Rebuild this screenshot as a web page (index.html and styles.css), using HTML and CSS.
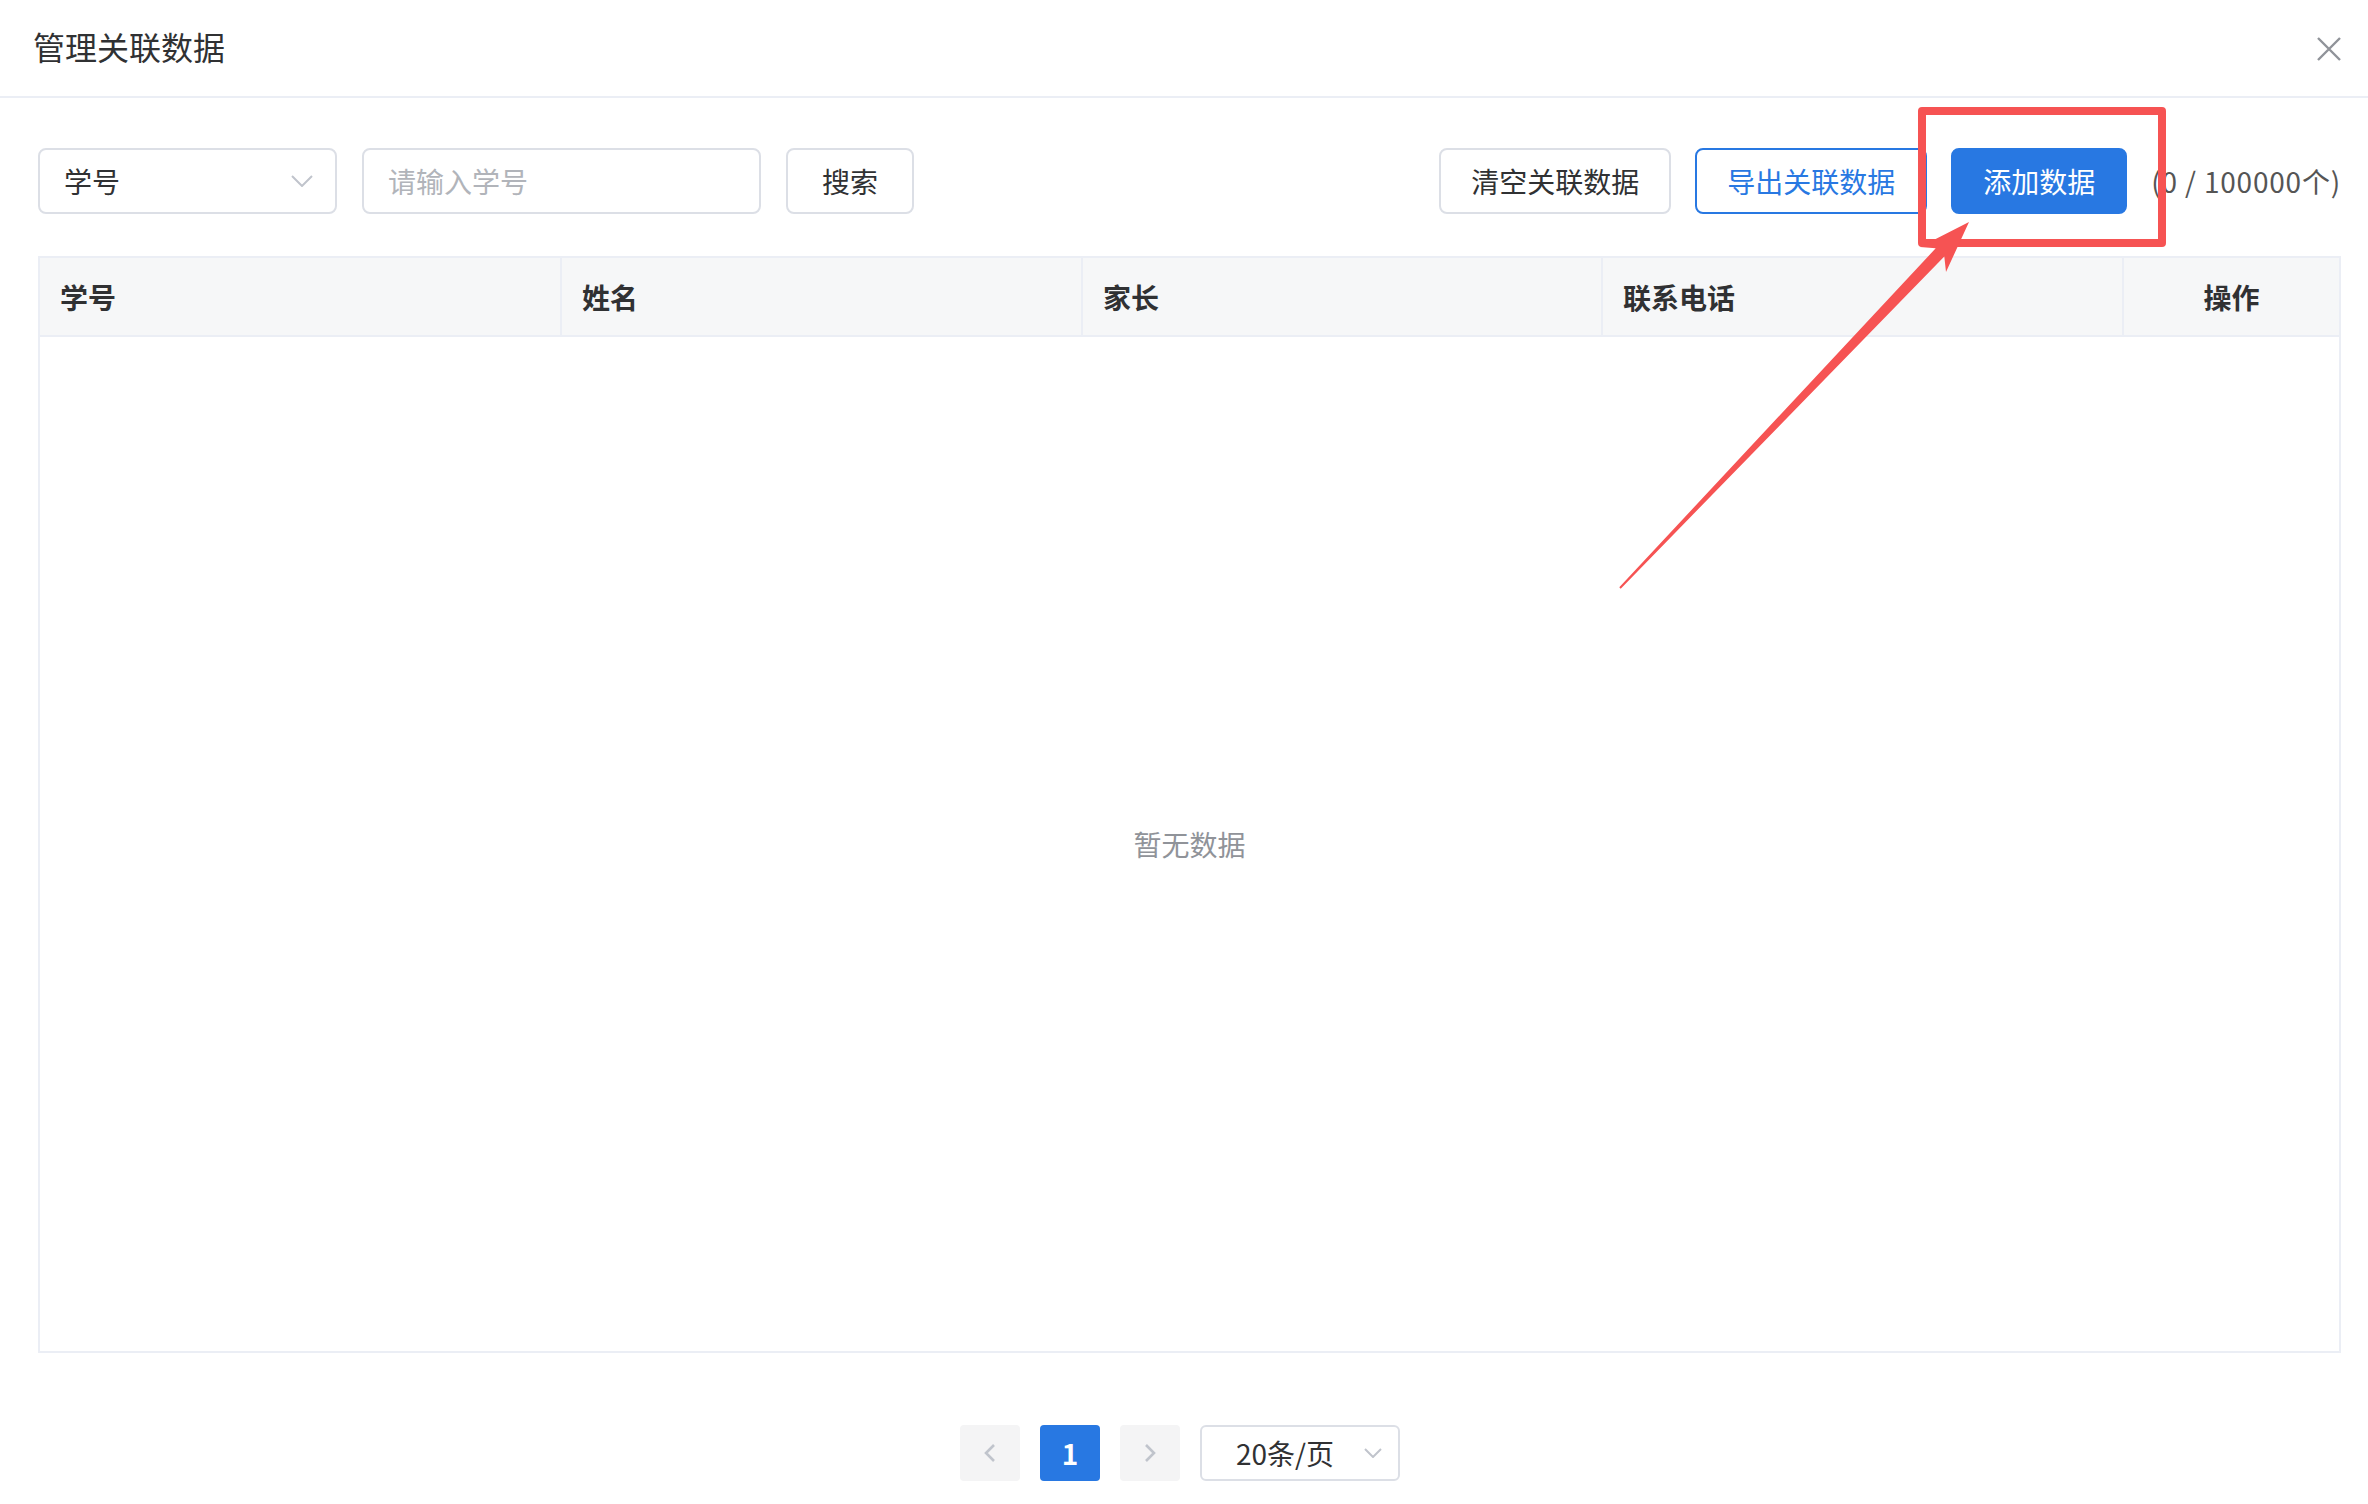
FILE: index.html
```html
<!DOCTYPE html>
<html lang="zh-CN">
<head>
  <meta charset="UTF-8">
  <meta name="viewport" content="width=device-width, initial-scale=1.0">
  <title>管理关联数据</title>
  <link rel="stylesheet" href="styles.css">
</head>
<body>

  <!-- Dialog header -->
  <div class="dialog-header">
    <span class="dialog-title">管理关联数据</span>
    <span class="dialog-close">
      <svg width="24" height="24" viewBox="0 0 24 24"><path d="M1 1L23 23M23 1L1 23" stroke="#909399" stroke-width="2.4" fill="none"/></svg>
    </span>
  </div>

  <div class="dialog-body">

    <!-- Toolbar -->
    <div class="toolbar">
      <div class="toolbar-left">
        <div class="select field-select">
          <span>学号</span>
          <svg width="22" height="12" viewBox="0 0 22 12"><path d="M1 1L11 11L21 1" stroke="#c0c4cc" stroke-width="2" fill="none"/></svg>
        </div>
        <div class="input">
          <span class="placeholder">请输入学号</span>
        </div>
        <button class="btn btn-search">搜索</button>
      </div>
      <div class="toolbar-right">
        <button class="btn btn-default">清空关联数据</button>
        <button class="btn btn-outline">导出关联数据</button>
        <button class="btn btn-primary">添加数据</button>
        <span class="count">(0 / 100000个)</span>
      </div>
    </div>

    <!-- Table -->
    <div class="table">
      <div class="table-head">
        <div class="th">学号</div>
        <div class="th">姓名</div>
        <div class="th">家长</div>
        <div class="th">联系电话</div>
        <div class="th th-center">操作</div>
      </div>
      <div class="table-empty">暂无数据</div>
    </div>

    <!-- Pagination -->
    <div class="pagination">
      <button class="page-btn">
        <svg width="12" height="18" viewBox="0 0 12 18"><path d="M10 1L2 9L10 17" stroke="#c0c4cc" stroke-width="2.6" fill="none"/></svg>
      </button>
      <button class="page-btn active">1</button>
      <button class="page-btn">
        <svg width="12" height="18" viewBox="0 0 12 18"><path d="M2 1L10 9L2 17" stroke="#c0c4cc" stroke-width="2.6" fill="none"/></svg>
      </button>
      <div class="select page-size">
        <span>20条/页</span>
        <svg width="18" height="10" viewBox="0 0 18 10"><path d="M1 1L9 9L17 1" stroke="#c0c4cc" stroke-width="2" fill="none"/></svg>
      </div>
    </div>
  </div>

  <!-- Annotation overlay -->
  <div class="mark-box"></div>
  <svg class="mark-arrow" width="2368" height="1504" viewBox="0 0 2368 1504">
    <polygon fill="#f65353" points="1969,222 1946,272 1944.3,256.5 1620.7,588.7 1619.3,587.3 1935.7,248.3 1920,247"/>
  </svg>

</body>
</html>
```

FILE: styles.css
```css
/* Base */
body {
  margin: 0;
  background-color: #fff;
  font-family: "Noto Sans CJK SC", "Noto Sans", sans-serif;
  color: #303133;
  font-size: 28px;
}

button {
  font-family: inherit;
}

/* Dialog header */
.dialog-header {
  height: 96px;
  display: flex;
  justify-content: space-between;
  align-items: center;
  padding: 0 27px 0 33px;
  border-bottom: 2px solid #ebeef5;
}

.dialog-title {
  font-size: 32px;
  line-height: 40px;
  color: #303133;
  margin-bottom: 4px;
}

.dialog-close {
  display: flex;
  margin-top: 2px;
}

/* Body */
.dialog-body {
  padding: 50px 27px 0 38px;
}

/* Toolbar */
.toolbar {
  display: flex;
  justify-content: space-between;
  align-items: center;
  height: 66px;
}

.toolbar-left,
.toolbar-right {
  display: flex;
  align-items: center;
}

.toolbar-left {
  gap: 25px;
}

.toolbar-right {
  gap: 24px;
}

.select,
.input {
  box-sizing: border-box;
  height: 66px;
  border: 2px solid #dcdfe6;
  border-radius: 8px;
  display: flex;
  align-items: center;
  background-color: #fff;
}

.field-select {
  width: 299px;
  padding: 0 22px 0 24px;
  justify-content: space-between;
  color: #303133;
}

.input {
  width: 399px;
  padding: 0 24px;
}

.placeholder {
  color: #b1b4ba;
}

.btn {
  box-sizing: border-box;
  height: 66px;
  border-radius: 8px;
  font-size: 28px;
  padding: 0;
  cursor: pointer;
}

.btn-search {
  width: 128px;
  background-color: #fff;
  border: 2px solid #dcdfe6;
  color: #303133;
}

.btn-default {
  width: 232px;
  background-color: #fff;
  border: 2px solid #dcdfe6;
  color: #303133;
}

.btn-outline {
  width: 232px;
  background-color: #fff;
  border: 2px solid #2878e2;
  color: #2878e2;
}

.btn-primary {
  width: 176px;
  background-color: #2878e2;
  border: 2px solid #2878e2;
  color: #fff;
}

.count {
  color: #555;
  white-space: nowrap;
  letter-spacing: 0.8px;
}

/* Table */
.table {
  margin-top: 42px;
  border: 2px solid #ebeef5;
}

.table-head {
  display: grid;
  grid-template-columns: 522px 521px 520px 521px 1fr;
  background-color: #f6f7f8;
  border-bottom: 2px solid #ebeef5;
}

.th {
  height: 77px;
  display: flex;
  align-items: center;
  padding-left: 20px;
  font-weight: bold;
  color: #303133;
  border-right: 2px solid #ebeef5;
}

.th:last-child {
  border-right: none;
}

.th-center {
  justify-content: center;
  padding-left: 0;
}

.table-empty {
  height: 1014px;
  display: flex;
  align-items: center;
  justify-content: center;
  color: #909399;
}

/* Pagination */
.pagination {
  margin-top: 72px;
  display: flex;
  justify-content: center;
  align-items: center;
  gap: 20px;
  padding-right: 19px;
}

.page-btn {
  width: 60px;
  height: 56px;
  border: none;
  border-radius: 4px;
  background-color: #f4f4f5;
  display: flex;
  align-items: center;
  justify-content: center;
  font-size: 28px;
  font-weight: bold;
  padding: 0;
}

.page-btn.active {
  background-color: #2878e2;
  color: #fff;
}

.page-size {
  width: 200px;
  height: 56px;
  border-radius: 6px;
  padding: 0 16px 0 34px;
  justify-content: space-between;
  color: #303133;
}

/* Annotation overlay */
.mark-box {
  position: absolute;
  left: 1918px;
  top: 107px;
  width: 232px;
  height: 124px;
  border: 8px solid #f65353;
  border-radius: 4px;
}

.mark-arrow {
  position: absolute;
  left: 0;
  top: 0;
  pointer-events: none;
}
```
